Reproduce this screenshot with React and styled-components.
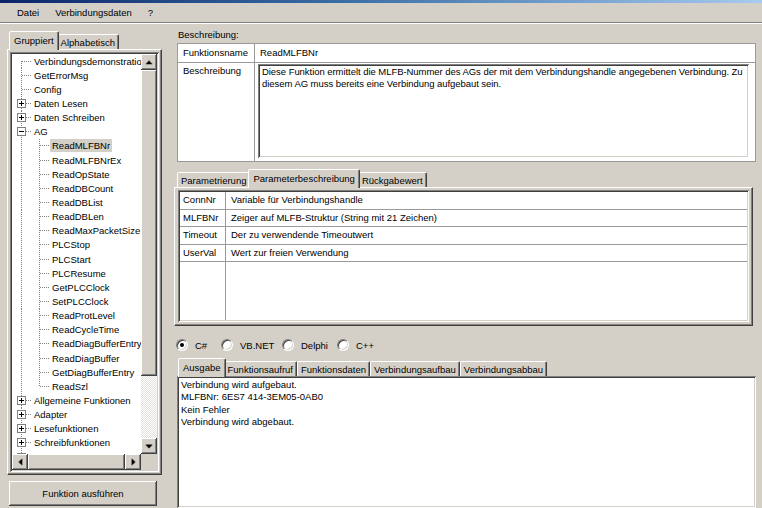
import React from 'react';
import styled, { createGlobalStyle, css } from 'styled-components';

const GlobalStyle = createGlobalStyle`
  html, body { margin: 0; padding: 0; }
  body {
    background: #d4d0c8;
    font-family: 'Liberation Sans', Arial, sans-serif;
    font-size: 9.5px;
    color: #000;
  }
  * { box-sizing: border-box; }
`;

const raised = css`
  background: #d4d0c8;
  box-shadow: inset -1px -1px #404040, inset 1px 1px #fff, inset -2px -2px #808080, inset 2px 2px #d4d0c8;
`;

const sunken = css`
  box-shadow: inset 1px 1px #808080, inset -1px -1px #fff, inset 2px 2px #404040, inset -2px -2px #d4d0c8;
`;

const Window = styled.div`
  width: 762px;
  height: 508px;
  overflow: hidden;
  display: flex;
  flex-direction: column;
`;

const TitleStrip = styled.div`
  flex: none;
  height: 3px;
  background: linear-gradient(to right, #0a246a, #3a6ea5 45%, #a6caf0);
`;

const MenuBar = styled.div`
  flex: none;
  height: 19px;
  display: flex;
  align-items: center;
  padding-left: 10px;
  gap: 2px;
`;

const MenuItem = styled.span`
  padding: 0 7px;
`;

const Separator = styled.div`
  flex: none;
  height: 2px;
  border-top: 1px solid #808080;
  border-bottom: 1px solid #fff;
`;

const Main = styled.div`
  flex: 1;
  min-height: 0;
  display: flex;
  gap: 12px;
  padding: 7px 6px 0 7px;
`;

const LeftColumn = styled.div`
  width: 155px;
  flex: none;
  display: flex;
  flex-direction: column;
  padding-bottom: 2px;
`;

const RightColumn = styled.div`
  flex: 1;
  min-width: 0;
  display: flex;
  flex-direction: column;
`;

const TabStrip = styled.div`
  flex: none;
  height: 18px;
  margin-top: ${({ $gap }) => $gap || 0}px;
  display: flex;
  align-items: flex-end;
  padding-left: ${({ $indent }) => $indent}px;
  position: relative;
  z-index: 1;
`;

const Tab = styled.div`
  position: relative;
  z-index: ${({ $active }) => ($active ? 2 : 1)};
  height: ${({ $active }) => ($active ? 19 : 15)}px;
  margin: 0 ${({ $active }) => ($active ? '-2px -1px' : '0 0')};
  padding: ${({ $active }) => ($active ? '2px 4px 0' : '1px 3px 0')};
  background: #d4d0c8;
  border: 1px solid;
  border-bottom: none;
  border-color: #fff #404040 transparent #fff;
  border-radius: 2px 2px 0 0;
  box-shadow: inset -1px 0 #808080;
  line-height: 13px;
  white-space: nowrap;
`;

const TabPanel = styled.div`
  flex: ${({ $grow }) => ($grow ? 1 : 'none')};
  height: ${({ $height }) => ($height ? `${$height}px` : 'auto')};
  min-height: 0;
  display: flex;
  flex-direction: column;
  margin-right: ${({ $right }) => $right || 0}px;
  padding: ${({ $pad }) => $pad};
  background: #d4d0c8;
  border: 1px solid;
  border-color: #fff #404040 #404040 #fff;
  box-shadow: inset -1px -1px #808080;
`;

/* ---------- tree ---------- */

const TreeBox = styled.div`
  flex: 1;
  min-height: 0;
  display: grid;
  grid-template-columns: 1fr 16px;
  grid-template-rows: 1fr 16px;
  padding: 2px;
  background: #fff;
  ${sunken};
`;

const TreeList = styled.div`
  overflow: hidden;
  padding: 0 0 0 1px;
`;

const TreeRow = styled.div`
  height: 14.15px;
  display: flex;
  align-items: center;
  white-space: nowrap;
`;

const dotV = 'repeating-linear-gradient(to bottom, #808080 0 1px, transparent 1px 2px)';
const dotH = 'repeating-linear-gradient(to right, #808080 0 1px, transparent 1px 2px)';

const vLayer = (v) => {
  if (v === 'full') return { img: dotV, size: '1px 100%', pos: '8px 0' };
  if (v === 'top') return { img: dotV, size: '1px 50%', pos: '8px 0' };
  if (v === 'bottom') return { img: dotV, size: '1px 50%', pos: '8px 100%' };
  return null;
};

const Guide = styled.div`
  flex: none;
  width: 18px;
  height: 100%;
  background-repeat: no-repeat;
  background-image: ${({ $v, $h }) =>
    [vLayer($v)?.img, $h ? dotH : null].filter(Boolean).join(', ') || 'none'};
  background-size: ${({ $v, $h }) =>
    [vLayer($v)?.size, $h ? '10px 1px' : null].filter(Boolean).join(', ') || 'auto'};
  background-position: ${({ $v, $h }) =>
    [vLayer($v)?.pos, $h ? '9px 50%' : null].filter(Boolean).join(', ') || '0 0'};
  display: flex;
  align-items: center;
`;

const Toggle = styled.span`
  margin-left: 4px;
  width: 9px;
  height: 9px;
  border: 1px solid #808080;
  background: #fff;
  display: grid;
  place-items: center;

  &::before,
  &::after {
    content: '';
    grid-area: 1 / 1;
    background: #000;
  }
  &::before {
    width: 5px;
    height: 1px;
  }
  &::after {
    width: 1px;
    height: ${({ $open }) => ($open ? 0 : 5)}px;
  }
`;

const NodeLabel = styled.span`
  margin-left: 1px;
  padding: 0 2px;
  height: 13px;
  line-height: 13px;
  background: ${({ $selected }) => ($selected ? '#d4d0c8' : 'transparent')};
`;

const ScrollV = styled.div`
  display: flex;
  flex-direction: column;
`;

const ScrollH = styled.div`
  display: flex;
`;

const ArrowButton = styled.div`
  flex: none;
  width: 16px;
  height: 16px;
  display: grid;
  place-items: center;
  ${raised};
`;

const Thumb = styled.div`
  flex: none;
  ${({ $vertical, $size }) => ($vertical ? `height: ${$size}px;` : `width: ${$size}px;`)}
  ${raised};
`;

const Track = styled.div`
  flex: 1;
  background: repeating-conic-gradient(#fff 0 25%, #e4e1db 0 50%) 0 0 / 2px 2px;
`;

const Corner = styled.div`
  background: #d4d0c8;
`;

const ArrowGlyph = ({ dir }) => {
  const paths = {
    up: 'M7 6h1v1H7zM6 7h3v1H6zM5 8h5v1H5zM4 9h7v1H4z',
    down: 'M4 6h7v1H4zM5 7h5v1H5zM6 8h3v1H6zM7 9h1v1H7z',
    left: 'M6 7h1v1H6zM7 6h1v3H7zM8 5h1v5H8zM9 4h1v7H9z',
    right: 'M6 4h1v7H6zM7 5h1v5H7zM8 6h1v3H8zM9 7h1v1H9z',
  };
  return (
    <svg width="14" height="14" viewBox="0 0 15 15">
      <path d={paths[dir]} fill="#000" />
    </svg>
  );
};

const PushButton = styled.div`
  flex: none;
  margin: 6px 0 0 2px;
  width: 148px;
  height: 25px;
  display: grid;
  place-items: center;
  ${raised};
`;

/* ---------- description ---------- */

const SectionLabel = styled.div`
  flex: none;
  height: 12px;
  line-height: 8px;
  padding-left: 4px;
`;

const PropGrid = styled.div`
  flex: none;
  height: 119px;
  margin: 0 0 0 3px;
  display: grid;
  grid-template-columns: 77px 1fr;
  grid-template-rows: 19px 1fr;
  border: 1px solid #9a9a9a;
  background: #fff;
`;

const PropCell = styled.div`
  padding: ${({ $pad }) => $pad};
  line-height: ${({ $first }) => ($first ? 17 : 13)}px;
  border-right: ${({ $label }) => ($label ? '1px solid #9a9a9a' : 'none')};
  border-bottom: ${({ $first }) => ($first ? '1px solid #9a9a9a' : 'none')};
  display: flex;
  flex-direction: column;
`;

const TextArea = styled.div`
  flex: 1;
  padding: 2px 4px;
  line-height: 11.5px;
  letter-spacing: -0.05px;
  background: #fff;
  ${sunken};
`;

/* ---------- parameter table ---------- */

const ParamTable = styled.div`
  flex: 1;
  display: grid;
  grid-template-columns: 46px 1fr;
  grid-template-rows: repeat(4, 17.5px) 1fr;
  padding: 2px;
  background: #fff;
  ${sunken};
`;

const ParamCell = styled.div`
  padding-left: ${({ $name }) => ($name ? 3 : 5)}px;
  line-height: 16px;
  white-space: nowrap;
  border-right: ${({ $name }) => ($name ? '1px solid #9a9a9a' : 'none')};
  border-bottom: ${({ $last }) => ($last ? 'none' : '1px solid #9a9a9a')};
`;

/* ---------- radios ---------- */

const RadioRow = styled.div`
  flex: none;
  height: 14px;
  margin-top: 12px;
  padding-left: 2px;
  display: flex;
  align-items: center;
`;

const RadioOption = styled.label`
  width: ${({ $w }) => ($w ? `${$w}px` : 'auto')};
  display: flex;
  align-items: center;
  gap: 7px;
`;

const RadioCircle = styled.span`
  width: 12px;
  height: 12px;
  border-radius: 50%;
  background: #fff;
  border: 1px solid;
  border-color: #808080 #fff #fff #808080;
  box-shadow: inset 1px 1px #404040, inset -1px -1px #d4d0c8;
  display: grid;
  place-items: center;

  &::after {
    content: '';
    width: 4px;
    height: 4px;
    border-radius: 50%;
    background: ${({ $checked }) => ($checked ? '#000' : 'transparent')};
  }
`;

/* ---------- output ---------- */

const OutputBox = styled.div`
  flex: 1;
  min-height: 0;
  margin-left: 3px;
  padding: 3px 4px;
  line-height: 12.3px;
  background: #fff;
  ${sunken};
`;

const topLevel = (label, toggle, first) => ({ label, depth: 0, toggle, first });
const child = (label, extra = {}) => ({ label, depth: 1, ...extra });

const treeItems = [
  topLevel('Verbindungsdemonstration', null, true),
  topLevel('GetErrorMsg'),
  topLevel('Config'),
  topLevel('Daten Lesen', 'closed'),
  topLevel('Daten Schreiben', 'closed'),
  topLevel('AG', 'open'),
  child('ReadMLFBNr', { selected: true }),
  child('ReadMLFBNrEx'),
  child('ReadOpState'),
  child('ReadDBCount'),
  child('ReadDBList'),
  child('ReadDBLen'),
  child('ReadMaxPacketSize'),
  child('PLCStop'),
  child('PLCStart'),
  child('PLCResume'),
  child('GetPLCClock'),
  child('SetPLCClock'),
  child('ReadProtLevel'),
  child('ReadCycleTime'),
  child('ReadDiagBufferEntrys'),
  child('ReadDiagBuffer'),
  child('GetDiagBufferEntry'),
  child('ReadSzl', { last: true }),
  topLevel('Allgemeine Funktionen', 'closed'),
  topLevel('Adapter', 'closed'),
  topLevel('Lesefunktionen', 'closed'),
  topLevel('Schreibfunktionen', 'closed'),
  topLevel('Bufferkonvertierung', 'closed'),
];

const params = [
  ['ConnNr', 'Variable für Verbindungshandle'],
  ['MLFBNr', 'Zeiger auf MLFB-Struktur (String mit 21 Zeichen)'],
  ['Timeout', 'Der zu verwendende Timeoutwert'],
  ['UserVal', 'Wert zur freien Verwendung'],
];

const languages = [
  { label: 'C#', w: 45, checked: true },
  { label: 'VB.NET', w: 61 },
  { label: 'Delphi', w: 55 },
  { label: 'C++' },
];

const outputTabs = ['Ausgabe', 'Funktionsaufruf', 'Funktionsdaten', 'Verbindungsaufbau', 'Verbindungsabbau'];

const outputLines = [
  'Verbindung wird aufgebaut.',
  'MLFBNr: 6ES7 414-3EM05-0AB0',
  'Kein Fehler',
  'Verbindung wird abgebaut.',
];

const TreeNode = ({ item }) => {
  if (item.depth === 0) {
    return (
      <TreeRow>
        <Guide $v={item.first ? 'bottom' : 'full'} $h>
          {item.toggle && <Toggle $open={item.toggle === 'open'} />}
        </Guide>
        <NodeLabel>{item.label}</NodeLabel>
      </TreeRow>
    );
  }
  return (
    <TreeRow>
      <Guide $v="full" />
      <Guide $v={item.last ? 'top' : 'full'} $h />
      <NodeLabel $selected={item.selected}>{item.label}</NodeLabel>
    </TreeRow>
  );
};

const App = () => (
  <Window>
    <GlobalStyle />
    <TitleStrip />
    <MenuBar>
      <MenuItem>Datei</MenuItem>
      <MenuItem>Verbindungsdaten</MenuItem>
      <MenuItem>?</MenuItem>
    </MenuBar>
    <Separator />
    <Main>
      <LeftColumn>
        <TabStrip $indent={4}>
          <Tab $active>Gruppiert</Tab>
          <Tab>Alphabetisch</Tab>
        </TabStrip>
        <TabPanel $grow $pad="2px">
          <TreeBox>
            <TreeList>
              {treeItems.map((item) => (
                <TreeNode key={item.label} item={item} />
              ))}
            </TreeList>
            <ScrollV>
              <ArrowButton>
                <ArrowGlyph dir="up" />
              </ArrowButton>
              <Thumb $vertical $size={306} />
              <Track />
              <ArrowButton>
                <ArrowGlyph dir="down" />
              </ArrowButton>
            </ScrollV>
            <ScrollH>
              <ArrowButton>
                <ArrowGlyph dir="left" />
              </ArrowButton>
              <Thumb $size={97} />
              <Track />
              <ArrowButton>
                <ArrowGlyph dir="right" />
              </ArrowButton>
            </ScrollH>
            <Corner />
          </TreeBox>
        </TabPanel>
        <PushButton>Funktion ausführen</PushButton>
      </LeftColumn>

      <RightColumn>
        <SectionLabel>Beschreibung:</SectionLabel>
        <PropGrid>
          <PropCell $label $first $pad="0 5px">
            Funktionsname
          </PropCell>
          <PropCell $first $pad="0 5px">
            ReadMLFBNr
          </PropCell>
          <PropCell $label $pad="1px 5px">
            Beschreibung
          </PropCell>
          <PropCell $pad="1px 6px 3px 3px">
            <TextArea>
              Diese Funktion ermittelt die MLFB-Nummer des AGs der mit dem Verbindungshandle angegebenen
              Verbindung. Zu
              <br />
              diesem AG muss bereits eine Verbindung aufgebaut sein.
            </TextArea>
          </PropCell>
        </PropGrid>

        <TabStrip $indent={3} $gap={7}>
          <Tab>Parametrierung</Tab>
          <Tab $active>Parameterbeschreibung</Tab>
          <Tab>Rückgabewert</Tab>
        </TabStrip>
        <TabPanel $height={139} $right={3} $pad="2px 3px 3px 3px">
          <ParamTable>
            {params.map(([name, text]) => (
              <React.Fragment key={name}>
                <ParamCell $name>{name}</ParamCell>
                <ParamCell>{text}</ParamCell>
              </React.Fragment>
            ))}
            <ParamCell $name $last />
            <ParamCell $last />
          </ParamTable>
        </TabPanel>

        <RadioRow>
          {languages.map((lang) => (
            <RadioOption key={lang.label} $w={lang.w}>
              <RadioCircle $checked={lang.checked} />
              {lang.label}
            </RadioOption>
          ))}
        </RadioRow>

        <TabStrip $indent={6} $gap={6}>
          {outputTabs.map((t, i) => (
            <Tab key={t} $active={i === 0}>
              {t}
            </Tab>
          ))}
        </TabStrip>
        <OutputBox>
          {outputLines.map((line) => (
            <div key={line}>{line}</div>
          ))}
        </OutputBox>
      </RightColumn>
    </Main>
  </Window>
);

export default App;
